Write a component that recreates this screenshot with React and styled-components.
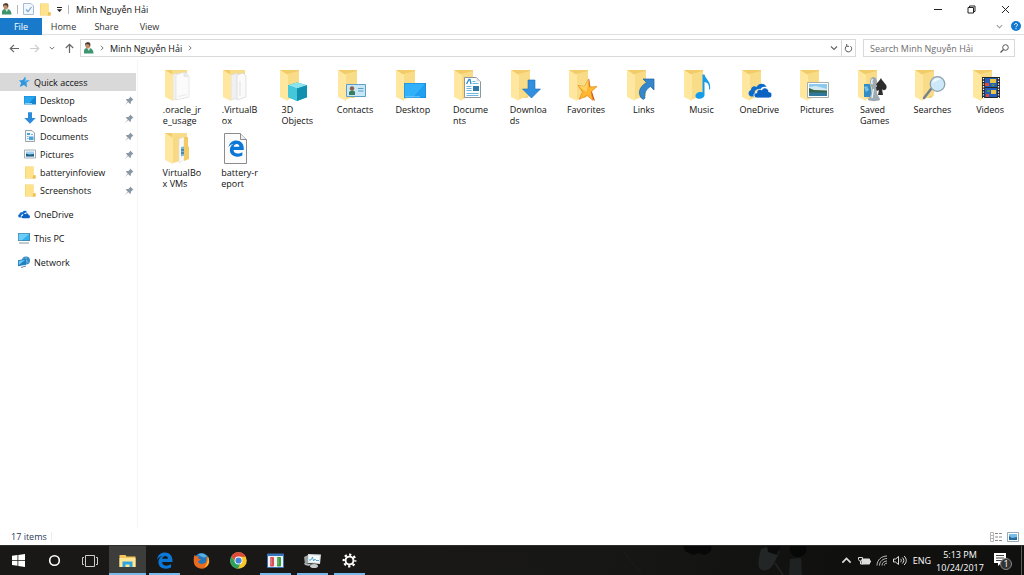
import React, { useState } from 'react';
import styled, { createGlobalStyle } from 'styled-components';

const GlobalStyle = createGlobalStyle`
	* {
		box-sizing: border-box;
	}
	body {
		margin: 0;
		background: #fff;
		color: #111;
		font-family: 'Open Sans', 'Noto Sans', sans-serif;
		font-size: 9px;
		line-height: 11px;
	}
	button, input {
		font: inherit;
		color: inherit;
		border: 0;
		padding: 0;
		background: none;
	}
	a {
		color: inherit;
		text-decoration: none;
	}
	ul {
		list-style: none;
		margin: 0;
		padding: 0;
	}
	svg {
		display: block;
		flex: none;
	}
`;

const Window = styled.div`
	display: flex;
	flex-direction: column;
	min-height: 100vh;
`;

const TitleBar = styled.header`
	display: flex;
	align-items: center;
	height: 18px;
	padding-right: 2px;
`;

const QuickTools = styled.div`
	display: flex;
	align-items: center;
	gap: 5px;
	padding-left: 1px;
	button {
		display: flex;
	}
`;

const Separator = styled.span`
	width: 1px;
	height: 9px;
	background: #b5b5b5;
`;

const Title = styled.h1`
	flex: 1;
	margin: 0 0 0 7px;
	font-size: 9px;
	font-weight: 400;
`;

const CaptionButton = styled.button`
	display: flex;
	justify-content: center;
	align-items: center;
	width: 34px;
	height: 16px;
`;

const Ribbon = styled.nav`
	display: flex;
	height: 17px;
	border-bottom: 1px solid #dfe0e1;
`;

const Tab = styled.button`
	width: ${({ $file }) => ($file ? 42 : 43)}px;
	height: 17px;
	color: ${({ $file }) => ($file ? '#fff' : '#333')};
	background: ${({ $file }) => ($file ? '#1979ca' : 'transparent')};
`;

const RibbonEnd = styled.div`
	display: flex;
	align-items: center;
	gap: 8px;
	margin-left: auto;
	padding-right: 3px;
	button {
		display: flex;
	}
`;

const AddressRow = styled.div`
	display: flex;
	align-items: center;
	gap: 7px;
	padding: 4px 9px 3px 9px;
`;

const NavButtons = styled.div`
	display: flex;
	align-items: center;
	justify-content: space-between;
	width: 66px;
	margin-right: -2px;
	button {
		display: flex;
	}
`;

const AddressBox = styled.div`
	display: flex;
	align-items: center;
	flex: 1;
	height: 18px;
	padding-left: 2px;
	border: 1px solid #d9d9d9;
`;

const Crumb = styled.span`
	margin: 0 5px;
`;

const AddressEnd = styled.div`
	display: flex;
	align-self: stretch;
	margin-left: auto;
	button {
		display: flex;
		align-items: center;
		justify-content: center;
		width: 14px;
	}
	button + button {
		border-left: 1px solid #d9d9d9;
	}
`;

const SearchBox = styled.label`
	display: flex;
	align-items: center;
	width: 152px;
	height: 18px;
	padding: 0 5px 0 6px;
	border: 1px solid #d9d9d9;
	input {
		flex: 1;
		min-width: 0;
		outline: none;
	}
	input::placeholder {
		color: #6d6d6d;
		opacity: 1;
	}
`;

const Body = styled.div`
	display: flex;
	flex: 1;
`;

const Sidebar = styled.nav`
	width: 138px;
	padding-top: 13px;
	border-right: 1px solid #f5f5f5;
`;

const SideGroup = styled.ul`
	margin-bottom: 6px;
`;

const SideLink = styled.a`
	display: flex;
	align-items: center;
	gap: 4px;
	height: 18px;
	margin-right: 1px;
	padding-left: ${({ $nested }) => ($nested ? 24 : 18)}px;
	padding-right: 2px;
	background: ${({ $active }) => ($active ? '#d9d9d9' : 'transparent')};
`;

const SideText = styled.span`
	flex: 1;
`;

const FileGrid = styled.ul`
	flex: 1;
	display: grid;
	grid-template-columns: repeat(15, 1fr);
	align-content: start;
	row-gap: 6px;
	padding: 9px 5px 0 15px;
`;

const FileItem = styled.li`
	display: flex;
	justify-content: center;
`;

const FileButton = styled.button`
	display: flex;
	flex-direction: column;
	align-items: center;
	gap: 1px;
	min-height: 57px;
`;

const FileName = styled.span`
	text-align: left;
	white-space: pre;
`;

const StatusBar = styled.footer`
	display: flex;
	align-items: center;
	height: 17px;
	padding: 0 5px 0 11px;
	color: #2b3a5c;
`;

const StatusSeparator = styled(Separator)`
	margin-left: 4px;
	background: #eee;
`;

const ViewButtons = styled.div`
	display: flex;
	gap: 4px;
	margin-left: auto;
	button {
		display: flex;
	}
`;

const TaskBar = styled.footer`
	display: flex;
	height: 30px;
	background: #191817;
	border-top: 1px solid #2d2e2c;
	color: #fff;
`;

const TaskButton = styled.button`
	display: flex;
	align-items: center;
	justify-content: center;
	width: 36px;
	height: 29px;
`;

const AppList = styled.div`
	display: flex;
	padding-left: 1px;
`;

const AppButton = styled(TaskButton)`
	width: 37px;
	background-color: ${({ $active }) => ($active ? '#3d3d3c' : 'transparent')};
	background-image: ${({ $running }) => ($running ? 'linear-gradient(#76b9ed, #76b9ed)' : 'none')};
	background-size: ${({ $active }) => ($active ? 37 : 31)}px 2px;
	background-position: center bottom;
	background-repeat: no-repeat;
`;

const Wallpaper = styled.svg`
	flex: 1;
	min-width: 0;
	height: 29px;
`;

const Tray = styled.div`
	display: flex;
	align-items: center;
	background: #10100f;
	button {
		display: flex;
		align-items: center;
		justify-content: center;
	}
`;

const TrayButton = styled.button`
	width: 18px;
	height: 29px;
`;

const Language = styled.button`
	width: 26px;
`;

const Clock = styled.time`
	width: 50px;
	line-height: 13px;
	text-align: center;
`;

const Notifications = styled.button`
	width: 36px;
	height: 29px;
`;

const ShowDesktop = styled.button`
	width: 3px;
	height: 29px;
	border-left: 1px solid #5b5b5b;
`;

const UserIcon = () => (
	<svg width="11" height="12" viewBox="0 0 11 12">
		<path d="M1 11.500V9c0-2 1.500-2.800 3-3h2.500C9 6.500 10.500 8 10.500 11.500z" fill="#3f9470" />
		<path d="M4 6l2 3 1-3z" fill="#e7f1ea" />
		<ellipse cx="4.800" cy="3.500" rx="2.300" ry="3" fill="#c18e68" />
		<path d="M2.200 4C1.500 1 3 .2 5 .2S8 1.600 7 5L6 2.500 3 2z" fill="#493a32" />
	</svg>
);

const SmallFolder = () => (
	<svg width="12" height="13" viewBox="0 0 12 13">
		<path d="M1 .5h8.500v8.500H11.500v3.500H1z" fill="#f3cb62" />
		<path d="M1.500 1h8v11h-8z" fill="#ffe28c" />
		<path d="M9.500 9.500H11.500v3H8.500z" fill="#ecc050" />
	</svg>
);

const Chevron = ({ size = 7, dir = 0, color = '#666' }) => (
	<svg width={size} height={size} viewBox="0 0 8 8">
		<path d="M1 2.500l3 3 3-3" transform={`rotate(${dir} 4 4)`} fill="none" stroke={color} strokeWidth="1.200" />
	</svg>
);

const Arrow = ({ dir = 0, color = '#666' }) => (
	<svg width="11" height="11" viewBox="0 0 11 11">
		<path d="M10 5.500H1.500M5 1.800L1.300 5.500 5 9.200" transform={`rotate(${dir} 5.500 5.500)`} fill="none" stroke={color} strokeWidth="1.200" />
	</svg>
);

const Pin = () => (
	<svg width="9" height="9" viewBox="0 0 9 9">
		<path d="M5.200.6l3.200 3.200-1 .4-1.500 1.500-.1 1.800-.7.600L3.200 6.100.6 8.600.3 8.400 2.800 5.600.9 3.700l.7-.6 1.800-.1 1.500-1.500z" fill="#8998a5" />
	</svg>
);

const sideIcons = {
	star: (
		<svg width="12" height="12" viewBox="0 0 12 12">
			<path d="M7.200.5l.6 3.600 4 .2-3.300 2.500.6 4.500-3.200-2.400-4.200 2.200 1.500-4.300L1 4.500l3.800-.4z" fill="#2f96dc" />
			<path d="M7.200.5L6.500 6l5.300-1.700-4-.2z" fill="#64bdf0" />
		</svg>
	),
	desktop: (
		<svg width="12" height="12" viewBox="0 0 12 12">
			<path d="M0 2h12v8.500H0z" fill="#1685d2" />
			<path d="M.5 2.500h11L4 10H.5z" fill="#27a7f1" />
			<path d="M1 9.500h7" stroke="#8bd1f9" />
		</svg>
	),
	download: (
		<svg width="12" height="12" viewBox="0 0 12 12">
			<path d="M4 .3h4V6h3.700L6 11.700.3 6H4z" fill="#2d8bdc" />
		</svg>
	),
	document: (
		<svg width="12" height="12" viewBox="0 0 12 12">
			<path d="M1.500.5h6.500L10.500 3v8.500h-9z" fill="#f4f7f9" stroke="#9ba3a9" />
			<path d="M3 5V3h3v2zM5 6.500h4.500V10H5z" fill="#4ba3dd" />
			<path d="M3 6.500h1.500M3 8.500h1.500M7 4.500h2" stroke="#76b9e2" />
		</svg>
	),
	picture: (
		<svg width="12" height="12" viewBox="0 0 12 12">
			<path d="M.5 2h11v8H.5z" fill="#fff" stroke="#a7adb1" />
			<path d="M2 3.500h8v5H2z" fill="#9fd0ef" />
			<path d="M2 5.500l3 1 5-.5v2.500H2z" fill="#1f5f81" />
		</svg>
	),
	folder: <SmallFolder />,
	cloud: (
		<svg width="12" height="9" viewBox="0 0 24 16">
			<path d="M5.500 14H3C-.5 13-.5 8 3 7.500 3 3.500 6.500 2.500 8.500 4 10.500-1 17-.5 18.500 4c-4-.9-6 .8-7 3.200C8 6.500 5.500 10 5.500 14z" fill="#0b6bce" />
			<path d="M9.500 15.500c-4-.5-3.500-5 .2-5.200C9.500 6.500 13 5.500 15 7.400 17 4 21 5.500 21 9.200c4 0 3.800 6.300 0 6.300z" fill="#0b62c2" />
		</svg>
	),
	pc: (
		<svg width="12" height="12" viewBox="0 0 12 12">
			<path d="M0 1h12v8H0z" fill="#4c7e9b" />
			<path d="M.7 1.700h10.600v6.600H.7z" fill="#32b1ef" />
			<path d="M.7 1.700h10.600L4 8.300H.7z" fill="#6ccdf8" />
			<path d="M1 11h10" stroke="#8795a0" />
		</svg>
	),
	network: (
		<svg width="12" height="12" viewBox="0 0 12 12">
			<circle cx="8" cy="4.500" r="4" fill="#3a8dc4" />
			<path d="M5.500 2.500l5 4M8 .8v7" stroke="#8bcdf2" strokeWidth=".7" />
			<path d="M0 4.200l8-1.500v6L0 10.200z" fill="#1f7fc0" />
			<path d="M.8 5l6.500-1.200L.8 9z" fill="#6cc7f3" />
			<path d="M3 11.500l5-1.500" stroke="#6c8495" />
		</svg>
	)
};

const fileArt = {
	papers: (
		<>
			<path d="M9 5l14-1v24l-14 3z" fill="#f1f1f0" stroke="#dedede" strokeWidth=".6" />
			<path d="M12 6l8-3 5 4v21l-13 3z" fill="#fbfbfb" stroke="#dadada" strokeWidth=".6" />
			<path d="M20 3v4.500l5-.5" fill="#eee" stroke="#d6d6d6" strokeWidth=".6" />
			<path d="M14 27.500l9-2" stroke="#e2e2e2" strokeWidth=".7" />
		</>
	),
	sheets: (
		<>
			<path d="M9 6l7-2v25l-7 2z" fill="#f0f0f0" stroke="#d8d8d8" strokeWidth=".6" />
			<path d="M15 6l6-2 3 3v21l-9 3z" fill="#fafafa" stroke="#d2d2d2" strokeWidth=".6" />
			<path d="M18 12v15" stroke="#e2e2e2" />
		</>
	),
	cube: (
		<>
			<path d="M18 13.500l10 2.700v12L18 32l-9-4V16.300z" fill="#27b0c7" />
			<path d="M9 16.300l9-2.800 10 2.700-10 3.300z" fill="#8be4ee" />
			<path d="M18 19.500l10-3.300v12L18 32z" fill="#128fae" />
			<path d="M9 16.300l9 3.200V32l-9-4z" fill="#43c7d9" />
		</>
	),
	contact: (
		<>
			<path d="M9.500 15.500h19v12h-19z" fill="#c9e6f6" stroke="#5aa0c7" />
			<path d="M12 26v-3c2-2 5-2 6 0v3z" fill="#358060" />
			<circle cx="15" cy="19.500" r="2.200" fill="#8a6046" />
			<path d="M21 19.500h5.500M21 22h5.500" stroke="#5aa0c7" />
		</>
	),
	desktop: (
		<>
			<path d="M9 14h22v15H9z" fill="#1682ce" />
			<path d="M9.500 14.500h21l-12 14h-9z" fill="#32b1fb" />
			<path d="M18.500 28.500l12-14v14z" fill="#1fa0f1" />
			<path d="M10 27.800h15" stroke="#77cbfa" />
		</>
	),
	document: (
		<>
			<path d="M11.500 8.500h12l4 4v16h-16z" fill="#fff" stroke="#8d979e" />
			<path d="M23.500 8.500v4h4z" fill="#d9dfe3" />
			<path d="M13.500 15l2.500-4.500h1L18 15" fill="none" stroke="#288dcc" strokeWidth="1.300" />
			<path d="M19.500 12.500h3M19.500 14.500h6M13.500 17.500h5M13.500 19.500h5M13.500 21.500h5M13.500 24.500h12M13.500 26.500h12" stroke="#5eaedc" strokeWidth=".9" />
			<path d="M20 17h6v5h-6z" fill="#2f78a9" />
		</>
	),
	download: <path d="M18 11h7v9h5.500l-9 9-9-9H18z" fill="#328ede" stroke="#1b6fb9" strokeWidth=".6" />,
	star: (
		<>
			<path d="M21 9l1.500 9 4.500 14-8-6z" fill="#d14e20" />
			<path d="M20.500 10l1 8 7.500-.5-6 5.500 2 8.500-6-5-8 4 3.500-7.500-4.500-6.500 6.500 1z" fill="#ffb733" stroke="#e48a1d" strokeWidth=".7" />
			<path d="M20.500 11l-2 12-8-6 6 .5z" fill="#ffd567" />
		</>
	),
	link: <path d="M17 10h11v11l-3.500-3.500C20 20 18 24 19 29l-2 1.500C11.500 26 12 18.500 20.500 13.500z" fill="#3387ca" stroke="#1d609d" strokeWidth=".7" />,
	music: (
		<path d="M19.500 5.500h2c1 5 7 7 5.500 15h-1c.5-5-1.500-7-4.500-7.500v13c0 4-8 5.500-9 1.500-.5-3.500 4-5.500 7-4z" fill="#149be9" />
	),
	cloud: (
		<g transform="translate(7 14)">
			<path d="M5.500 13.500H3C-.5 12.500 0 8 3 7 3 3.500 6.500 2.500 8.500 4 10.500-.5 17-.5 18.500 4c-3-.9-5 .4-6 2.200C8.500 5.500 6 8 6.800 9.800z" fill="#0c6ccd" />
			<path d="M9 15c-4-.5-4-5-.2-5.200C8.500 6.500 12 5.500 13.600 7 15.500 3.500 20.700 4.500 20.700 8.800 25 8.800 24.800 15 21 15z" fill="#0b62c2" stroke="#fff" strokeWidth=".8" />
		</g>
	),
	picture: (
		<>
			<path d="M8.500 13.500h21v15h-21z" fill="#fff" stroke="#a7acad" />
			<path d="M10 15h18v12H10z" fill="#8bc9ed" />
			<path d="M10 18l7-1 11 3v3H10z" fill="#d5eaf0" />
			<path d="M10 19l5 2 13 .5V24H10z" fill="#356449" />
			<path d="M10 23.500h18V27H10z" fill="#30789e" />
		</>
	),
	games: (
		<>
			<path d="M7 15h6l1 4v9H7z" fill="#328dc7" />
			<path d="M7 18l3-1 2 4-3 2z" fill="#77c0e5" />
			<path d="M24 9c2 5 6.500 6 5.500 10-1 3-4 2.500-4.500 1l1 6h-5l1-5c-2 2-5 0-4-4 1-3 4-4 6-8z" fill="#2d2d2e" />
			<path d="M11 31c0-3 3-3 3-7l1-6h-2v-2h1c-2-3-1-7 2-8 4 0 5 5 3 8h1v2h-1l1 6c1 4 3 4 3 7-3 1.500-9 1.500-12 0z" fill="#9eaab1" />
			<path d="M15.500 10c-1 2-1 4 0 5M16.500 20l-1.500 9" stroke="#eaf0f2" strokeWidth="1.500" fill="none" />
		</>
	),
	search: (
		<>
			<path d="M17 20l-7 9" stroke="#77838c" strokeWidth="2.500" strokeLinecap="round" />
			<circle cx="23.500" cy="15" r="7.300" fill="#cde9f8" stroke="#8ba0ae" strokeWidth="1.300" />
			<path d="M18 14c1-4 5-6 9-4-4 1-6 3-9 4z" fill="#f3fbff" />
		</>
	),
	video: (
		<>
			<path d="M10 8h18v21H10z" fill="#262525" />
			<path d="M13 9h12v9H13zM13 19h12v9H13z" fill="#225cbc" />
			<path d="M13 14h4v3h-4zM14 25h3v3h-3z" fill="#db493b" />
			<path d="M18 10h6v4h-6zM19 21h5v4h-5z" fill="#eac447" />
			<path d="M19 15h4l-2 3zM15 21h3v2h-3z" fill="#4c9453" />
			<path d="M11.500 9v20M26.500 9v20" stroke="#fff" strokeWidth="1.300" strokeDasharray="1.300 1.400" />
		</>
	),
	vms: (
		<>
			<path d="M9 6l7-3v26l-7 2z" fill="#f7d986" />
			<path d="M15 7l5-2v23l-5 3z" fill="#f8f8f6" stroke="#ddd" strokeWidth=".5" />
			<path d="M17 15l3-.5v9l-3 1z" fill="#7db7d8" />
			<path d="M17 18h3M17 21h3" stroke="#235f89" />
			<path d="M20 5h4v9l1 1v12l-5 2z" fill="#f3ca63" />
		</>
	)
};

const openFolders = ['papers', 'sheets', 'vms'];

const FolderIcon = ({ art }) => {
	const open = openFolders.includes(art);

	return (
		<svg width="34" height="34" viewBox="1 0 34 34">
			<path d="M1 1h19v25l-3 3L1 28z" fill="#f1cc69" />
			<path d={open ? 'M8 1h15v27H8z' : 'M8 5l12-3v24l-12 5z'} fill="#f9dc88" />
			{open && fileArt[art]}
			<path d="M1 1l8 5v26L1 28z" fill="#ffe7a0" />
			{!open && fileArt[art]}
		</svg>
	);
};

const edgePath = 'M1.400 10.800C2.400 4 7 .7 12.500.7c6.500 0 10.700 4.700 10.700 10.800v2.700H8.600c.3 6 7.500 6.200 12.600 3.200V22c-9 4.200-18 .6-17.800-8 .1-4 2.400-7 5.500-8.500-3.400.5-6 2.500-7.500 5.300zM8.800 9.700h8.100c.3-5.300-7.300-5.300-8.100 0z';

const HtmlFileIcon = () => (
	<svg width="34" height="34" viewBox="4 0 34 34">
		<path d="M5.500 1.500h16l6 6v24h-22z" fill="#fcfcfc" stroke="#8c8c8c" />
		<path d="M21.500 1.500v6h6" fill="#eee" stroke="#8c8c8c" />
		<g transform="translate(8.500 8) scale(.7)">
			<path d={edgePath} fill="#0b78d7" />
		</g>
	</svg>
);

const appIcons = {
	explorer: (
		<svg width="17" height="16" viewBox="0 0 16 16">
			<path d="M0 2h6l1 1.500h9V14H0z" fill="#f2c657" />
			<path d="M0 5h16v9H0z" fill="#ffe596" />
			<path d="M3 14V8.500h10V14h-3v-2.500H6V14z" fill="#31a5df" />
		</svg>
	),
	edge: (
		<svg width="17" height="17" viewBox="0 0 24 24">
			<path d={edgePath} fill="#0b78d7" />
		</svg>
	),
	firefox: (
		<svg width="17" height="17" viewBox="0 0 17 17">
			<circle cx="8.500" cy="8.500" r="7.500" fill="#2376bd" />
			<path d="M5 2.500c3-2 7-1 9 2l-3 1-3-1z" fill="#58b3e2" />
			<path d="M1.500 3l2 1.500L6 4 5 6.500l3 1-3 2c1 3 5 3 7.500 1 1.500-2 1.200-4 .3-6C16 6 17 9 15.800 12c-3 7-13 5.500-14.700-.5C.5 8.500.5 6 1.500 3z" fill="#e96b1f" />
			<path d="M14.500 4c3 4 1.500 10-3 11.300C14 12 15.300 9 14.500 4z" fill="#f8bb32" />
		</svg>
	),
	chrome: (
		<svg width="17" height="17" viewBox="0 0 16 16">
			<circle cx="8" cy="8" r="7.800" fill="#f5c72c" />
			<path d="M1.200 4.100A7.800 7.800 0 0 1 14.900 4.500H8L5 9.500z" fill="#dd4b3e" />
			<path d="M1.200 4.100L5 9.800l4.500 1.500L7.500 15.800A7.800 7.800 0 0 1 1.200 4.100z" fill="#2da160" />
			<circle cx="8" cy="8" r="3.700" fill="#fff" />
			<circle cx="8" cy="8" r="2.900" fill="#4285d8" />
		</svg>
	),
	battery: (
		<svg width="17" height="16" viewBox="0 0 17 16">
			<path d="M.5 1h16v13.500H.5z" fill="#edf2f7" stroke="#3a71b5" />
			<path d="M.5 1h16v2H.5z" fill="#3976bc" />
			<rect x="3" y="4" width="4" height="9.500" rx="1" fill="#d94d53" />
			<rect x="10" y="4" width="4" height="9.500" rx="1" fill="#3c9a38" />
			<path d="M4 5v7M11 5v7" stroke="#ffffff66" />
		</svg>
	),
	monitor: (
		<svg width="17" height="16" viewBox="0 0 17 16">
			<path d="M0 4l4-2v8l-3 1z" fill="#9ca2a4" />
			<path d="M4 1l13 .5-1 9.500-12-1z" fill="#dfe4e6" />
			<path d="M5 2.500l10.500.5-.8 6.500L5 8.500z" fill="#f7fafb" />
			<path d="M5 7h2l1.500-3 1 4 1.500-2 1 1.500h3" fill="none" stroke="#3492c5" strokeWidth=".8" />
			<path d="M0 10l7 1-2 2-4-1z" fill="#b2b7b9" />
			<ellipse cx="10" cy="13" rx="4" ry="2" fill="#c7cccd" />
		</svg>
	),
	settings: (
		<svg width="15" height="15" viewBox="0 0 16 16">
			<circle cx="8" cy="8" r="4.200" fill="none" stroke="#fff" strokeWidth="2" />
			<circle cx="8" cy="8" r="6.200" fill="none" stroke="#fff" strokeWidth="2.400" strokeDasharray="2.430 2.440" strokeDashoffset="1.200" />
		</svg>
	)
};

const quickAccess = [
	{ name: 'Desktop', icon: 'desktop' },
	{ name: 'Downloads', icon: 'download' },
	{ name: 'Documents', icon: 'document' },
	{ name: 'Pictures', icon: 'picture' },
	{ name: 'batteryinfoview', icon: 'folder' },
	{ name: 'Screenshots', icon: 'folder' }
];

const places = [
	{ name: 'OneDrive', icon: 'cloud' },
	{ name: 'This PC', icon: 'pc' },
	{ name: 'Network', icon: 'network' }
];

const files = [
	{ name: '.oracle_jr\ne_usage', art: 'papers' },
	{ name: '.VirtualB\nox', art: 'sheets' },
	{ name: '3D\nObjects', art: 'cube' },
	{ name: 'Contacts', art: 'contact' },
	{ name: 'Desktop', art: 'desktop' },
	{ name: 'Docume\nnts', art: 'document' },
	{ name: 'Downloa\nds', art: 'download' },
	{ name: 'Favorites', art: 'star' },
	{ name: 'Links', art: 'link' },
	{ name: 'Music', art: 'music' },
	{ name: 'OneDrive', art: 'cloud' },
	{ name: 'Pictures', art: 'picture' },
	{ name: 'Saved\nGames', art: 'games' },
	{ name: 'Searches', art: 'search' },
	{ name: 'Videos', art: 'video' },
	{ name: 'VirtualBo\nx VMs', art: 'vms' },
	{ name: 'battery-r\neport', art: 'html' }
];

const apps = [
	{ name: 'File Explorer', icon: 'explorer', active: true, running: true },
	{ name: 'Microsoft Edge', icon: 'edge', running: true },
	{ name: 'Firefox', icon: 'firefox' },
	{ name: 'Chrome', icon: 'chrome' },
	{ name: 'BatteryInfoView', icon: 'battery', running: true },
	{ name: 'Resource Monitor', icon: 'monitor', running: true },
	{ name: 'Settings', icon: 'settings', running: true }
];

const Header = () => (
	<>
		<TitleBar>
			<QuickTools>
				<UserIcon />
				<Separator />
				<button aria-label="Properties">
					<svg width="11" height="12" viewBox="0 0 11 12">
						<path d="M.5.500h7.500l2.500 2.500v8.500H.5z" fill="#f2f7fd" stroke="#a6bbd5" />
						<path d="M3 6.500l2 2 3.500-4.500" fill="none" stroke="#7aa5d6" strokeWidth="1.200" />
					</svg>
				</button>
				<button aria-label="New folder"><SmallFolder /></button>
				<button aria-label="Customize toolbar">
					<svg width="7" height="7" viewBox="0 0 7 7">
						<path d="M1 1.500h5" stroke="#222" />
						<path d="M.8 3.300h5.400L3.500 6z" fill="#222" />
					</svg>
				</button>
				<Separator />
			</QuickTools>
			<Title>Minh Nguyễn Hải</Title>
			<CaptionButton aria-label="Minimize">
				<svg width="9" height="9" viewBox="0 0 9 9"><path d="M1 4.500h8" stroke="#222" /></svg>
			</CaptionButton>
			<CaptionButton aria-label="Restore">
				<svg width="9" height="9" viewBox="0 0 9 9">
					<path d="M1 2.500h5.500V8H1zM2.500 2.500V1H8v5.500H6.500" fill="none" stroke="#222" />
				</svg>
			</CaptionButton>
			<CaptionButton aria-label="Close">
				<svg width="9" height="9" viewBox="0 0 9 9"><path d="M1 1l7 7M8 1L1 8" stroke="#222" /></svg>
			</CaptionButton>
		</TitleBar>
		<Ribbon>
			<Tab $file>File</Tab>
			<Tab>Home</Tab>
			<Tab>Share</Tab>
			<Tab>View</Tab>
			<RibbonEnd>
				<button aria-label="Expand ribbon"><Chevron color="#999" /></button>
				<button aria-label="Help">
					<svg width="10" height="10" viewBox="0 0 10 10">
						<circle cx="5" cy="5" r="5" fill="#1279d2" />
						<path d="M3.500 4c0-2 3-2 3 0 0 1-1.500 1-1.500 2.200M5 7.200v1" fill="none" stroke="#fff" />
					</svg>
				</button>
			</RibbonEnd>
		</Ribbon>
	</>
);

const AddressBar = () => {
	const [query, setQuery] = useState('');

	return (
		<AddressRow>
			<NavButtons>
				<button aria-label="Back"><Arrow /></button>
				<button aria-label="Forward"><Arrow dir={180} color="#ccc" /></button>
				<button aria-label="Recent locations"><Chevron size={6} /></button>
				<button aria-label="Up"><Arrow dir={90} /></button>
			</NavButtons>
			<AddressBox>
				<UserIcon />
				<Crumb><Chevron size={6} dir={-90} /></Crumb>
				<a href="#home">Minh Nguyễn Hải</a>
				<Crumb><Chevron size={6} dir={-90} /></Crumb>
				<AddressEnd>
					<button aria-label="Previous locations"><Chevron size={8} /></button>
					<button aria-label="Refresh">
						<svg width="9" height="9" viewBox="0 0 9 9">
							<path d="M6.500 2.200A3.200 3.200 0 1 1 2.700 2M2.700 0v2.300H5" fill="none" stroke="#555" />
						</svg>
					</button>
				</AddressEnd>
			</AddressBox>
			<SearchBox>
				<input
					aria-label="Search"
					placeholder="Search Minh Nguyễn Hải"
					value={query}
					onChange={(e) => setQuery(e.target.value)}
				/>
				<svg width="9" height="9" viewBox="0 0 9 9">
					<circle cx="5.500" cy="3.500" r="2.800" fill="none" stroke="#555" />
					<path d="M3.500 5.500L.5 8.500" stroke="#555" strokeWidth="1.200" />
				</svg>
			</SearchBox>
		</AddressRow>
	);
};

const SideBar = () => (
	<Sidebar>
		<SideGroup>
			<li>
				<SideLink href="#quick-access" $active>
					{sideIcons.star}
					<SideText>Quick access</SideText>
				</SideLink>
			</li>
			{quickAccess.map(({ name, icon }) => (
				<li key={name}>
					<SideLink href={`#${name}`} $nested>
						{sideIcons[icon]}
						<SideText>{name}</SideText>
						<Pin />
					</SideLink>
				</li>
			))}
		</SideGroup>
		{places.map(({ name, icon }) => (
			<SideGroup key={name}>
				<li>
					<SideLink href={`#${name}`}>
						{sideIcons[icon]}
						<SideText>{name}</SideText>
					</SideLink>
				</li>
			</SideGroup>
		))}
	</Sidebar>
);

const Files = () => (
	<FileGrid>
		{files.map(({ name, art }) => (
			<FileItem key={name}>
				<FileButton>
					{art === 'html' ? <HtmlFileIcon /> : <FolderIcon art={art} />}
					<FileName>{name}</FileName>
				</FileButton>
			</FileItem>
		))}
	</FileGrid>
);

const Status = () => (
	<StatusBar>
		<span>{files.length} items</span>
		<StatusSeparator />
		<ViewButtons>
			<button aria-label="Details view">
				<svg width="13" height="10" viewBox="0 0 13 10">
					<path d="M.5.500h3v9h-3zM.5 3.500h3M.5 6.500h3" fill="none" stroke="#b5b5b5" />
					<path d="M5 1.500h3M9 1.500h3M5 5h3M9 5h3M5 8.500h3M9 8.500h3" stroke="#8a8a8a" />
				</svg>
			</button>
			<button aria-label="Large icons view">
				<svg width="12" height="10" viewBox="0 0 12 10">
					<path d="M.5.500h11v9H.5z" fill="#fff" stroke="#9aa9b3" />
					<path d="M2 2h8v6H2z" fill="#78bce8" />
					<path d="M2 4l3 2 5-1v3H2z" fill="#276a9d" />
				</svg>
			</button>
		</ViewButtons>
	</StatusBar>
);

const Taskbar = () => (
	<TaskBar>
		<TaskButton aria-label="Start">
			<svg width="13" height="13" viewBox="0 0 13 13">
				<path d="M0 1.800L5.500 1v5H0zM6.300.9L13 0v6H6.300zM0 6.800h5.500v5L0 11zM6.300 6.800H13V13l-6.700-1z" fill="#fff" />
			</svg>
		</TaskButton>
		<TaskButton aria-label="Cortana">
			<svg width="13" height="13" viewBox="0 0 13 13">
				<circle cx="6.500" cy="6.500" r="4.800" fill="none" stroke="#fff" strokeWidth="1.600" />
			</svg>
		</TaskButton>
		<TaskButton aria-label="Task view">
			<svg width="16" height="12" viewBox="0 0 16 12">
				<path d="M3.500.500h9v11h-9zM2 2.500H.5v7H2M14 2.500h1.500v7H14" fill="none" stroke="#ccc" />
			</svg>
		</TaskButton>
		<AppList>
			{apps.map(({ name, icon, active, running }) => (
				<AppButton key={name} aria-label={name} $active={active} $running={running}>
					{appIcons[icon]}
				</AppButton>
			))}
		</AppList>
		<Wallpaper viewBox="0 0 470 29" preserveAspectRatio="xMaxYMin slice" aria-hidden="true">
			<defs>
				<linearGradient id="shade">
					<stop offset="0" stopColor="#191817" />
					<stop offset=".5" stopColor="#171716" />
					<stop offset="1" stopColor="#10100f" />
				</linearGradient>
			</defs>
			<rect width="470" height="29" fill="url(#shade)" />
			<path d="M316 0h28c2 4-2 8-7 9l-5-2-6 2-8-4z" fill="#080808" />
			<path d="M394 3l7-2 12 4-7 14c-3 5-9 7-13 4-3-4-1-12 1-20z" fill="#232627" />
			<path d="M400 0h14l-4 9-9-3z" fill="#0b0b0b" />
			<path d="M423 13l11-1 1 17h-13z" fill="#1f2223" />
			<path d="M423 0h16c2 5-2 11-8 11s-9-5-8-11z" fill="#060707" />
			<path d="M408 17l8 12" stroke="#202221" strokeWidth="2" />
			<path d="M256 5l18 22" stroke="#1c1c1b" />
		</Wallpaper>
		<Tray>
			<TrayButton aria-label="Show hidden icons"><Chevron size={11} dir={180} color="#ddd" /></TrayButton>
			<TrayButton aria-label="Battery">
				<svg width="13" height="10" viewBox="0 0 13 10">
					<path d="M4 3h7.500v5H4z" fill="#ddd" stroke="#ddd" />
					<path d="M12.500 4.500v2M.5 1.500h4v2c0 2-4 2-4 0zM2.500 5v3h2" fill="none" stroke="#ddd" />
				</svg>
			</TrayButton>
			<TrayButton aria-label="Network">
				<svg width="12" height="11" viewBox="0 0 12 11">
					<path d="M1 10.500C1 5 5.500 1 11 1M3.500 10.500C3.500 6.500 7 3.500 11 3.500M6 10.500C6 8 8 6 11 6M8.300 10.500c0-1.500 1.200-2.300 2.700-2.300" fill="none" stroke="#bbb" />
				</svg>
			</TrayButton>
			<TrayButton aria-label="Volume">
				<svg width="14" height="11" viewBox="0 0 14 11">
					<path d="M.5 4h2l3-2.500v8L2.500 7h-2zM7.500 3.800c1 1 1 2.400 0 3.400M9.300 2.500c2 1.800 2 4.200 0 6M11 1c3 2.500 3 6.500 0 9" fill="none" stroke="#ddd" />
				</svg>
			</TrayButton>
			<Language>ENG</Language>
			<Clock dateTime="2017-10-24T17:13">5:13 PM<br />10/24/2017</Clock>
			<Notifications aria-label="1 notification">
				<svg width="18" height="18" viewBox="0 0 18 18">
					<path d="M0 1h12v10H7l-3 3v-3H0z" fill="#fff" />
					<path d="M2 3.500h8M2 6h8M2 8.500h6" stroke="#444" />
					<circle cx="12" cy="12" r="5.500" fill="#333" stroke="#888" />
					<text x="12" y="15" fill="#fff" fontSize="9" textAnchor="middle">1</text>
				</svg>
			</Notifications>
			<ShowDesktop aria-label="Show desktop" />
		</Tray>
	</TaskBar>
);

export default function App() {
	return (
		<>
			<GlobalStyle />
			<Window>
				<Header />
				<AddressBar />
				<Body>
					<SideBar />
					<Files />
				</Body>
				<Status />
				<Taskbar />
			</Window>
		</>
	);
}
